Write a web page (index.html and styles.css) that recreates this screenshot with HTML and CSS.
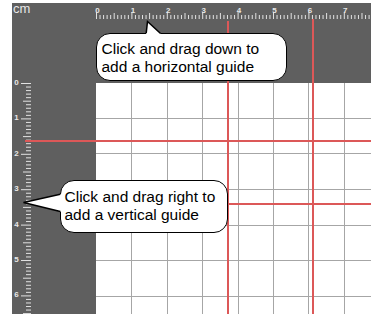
FILE: index.html
```html
<!DOCTYPE html>
<html>
<head>
<meta charset="utf-8">
<link rel="stylesheet" href="styles.css">
</head>
<body>
<div class="app">
  <div class="corner">cm</div>
  <div class="ruler-top">
    <svg class="ruler-svg" width="275" height="80" viewBox="0 0 275 80">
      <path class="ticks" d="M0.5,9v7
        m3.54,-4v4m3.54,-4v4m3.54,-4v4m3.54,-4v4m3.54,-6v6m3.54,-4v4m3.54,-4v4m3.54,-4v4m3.54,-4v4m3.54,-7v7
        m3.54,-4v4m3.54,-4v4m3.54,-4v4m3.54,-4v4m3.54,-6v6m3.54,-4v4m3.54,-4v4m3.54,-4v4m3.54,-4v4m3.54,-7v7
        m3.54,-4v4m3.54,-4v4m3.54,-4v4m3.54,-4v4m3.54,-6v6m3.54,-4v4m3.54,-4v4m3.54,-4v4m3.54,-4v4m3.54,-7v7
        m3.54,-4v4m3.54,-4v4m3.54,-4v4m3.54,-4v4m3.54,-6v6m3.54,-4v4m3.54,-4v4m3.54,-4v4m3.54,-4v4m3.54,-7v7
        m3.54,-4v4m3.54,-4v4m3.54,-4v4m3.54,-4v4m3.54,-6v6m3.54,-4v4m3.54,-4v4m3.54,-4v4m3.54,-4v4m3.54,-7v7
        m3.54,-4v4m3.54,-4v4m3.54,-4v4m3.54,-4v4m3.54,-6v6m3.54,-4v4m3.54,-4v4m3.54,-4v4m3.54,-4v4m3.54,-7v7
        m3.54,-4v4m3.54,-4v4m3.54,-4v4m3.54,-4v4m3.54,-6v6m3.54,-4v4m3.54,-4v4m3.54,-4v4m3.54,-4v4m3.54,-7v7
        m3.54,-4v4m3.54,-4v4m3.54,-4v4m3.54,-4v4m3.54,-6v6m3.54,-4v4m3.54,-4v4"/>
      <g class="nums">
        <text x="1.5" y="9.5">0</text>
        <text x="36.9" y="9.5">1</text>
        <text x="72.3" y="9.5">2</text>
        <text x="107.7" y="9.5">3</text>
        <text x="143.1" y="9.5">4</text>
        <text x="178.5" y="9.5">5</text>
        <text x="213.9" y="9.5">6</text>
        <text x="249.3" y="9.5">7</text>
      </g>
    </svg>
  </div>
  <div class="ruler-left">
    <svg class="ruler-svg" width="84" height="231" viewBox="0 0 84 231">
      <path class="ticks" d="M9,0.5h10
        m-5,3.54h5m-5,3.54h5m-5,3.54h5m-5,3.54h5m-8,3.54h8m-5,3.54h5m-5,3.54h5m-5,3.54h5m-5,3.54h5m-10,3.54h10
        m-5,3.54h5m-5,3.54h5m-5,3.54h5m-5,3.54h5m-8,3.54h8m-5,3.54h5m-5,3.54h5m-5,3.54h5m-5,3.54h5m-10,3.54h10
        m-5,3.54h5m-5,3.54h5m-5,3.54h5m-5,3.54h5m-8,3.54h8m-5,3.54h5m-5,3.54h5m-5,3.54h5m-5,3.54h5m-10,3.54h10
        m-5,3.54h5m-5,3.54h5m-5,3.54h5m-5,3.54h5m-8,3.54h8m-5,3.54h5m-5,3.54h5m-5,3.54h5m-5,3.54h5m-10,3.54h10
        m-5,3.54h5m-5,3.54h5m-5,3.54h5m-5,3.54h5m-8,3.54h8m-5,3.54h5m-5,3.54h5m-5,3.54h5m-5,3.54h5m-10,3.54h10
        m-5,3.54h5m-5,3.54h5m-5,3.54h5m-5,3.54h5m-8,3.54h8m-5,3.54h5m-5,3.54h5m-5,3.54h5m-5,3.54h5m-10,3.54h10
        m-5,3.54h5m-5,3.54h5m-5,3.54h5m-5,3.54h5m-8,3.54h8"/>
      <g class="nums">
        <text x="4.5" y="2">0</text>
        <text x="4.5" y="37.4">1</text>
        <text x="4.5" y="72.8">2</text>
        <text x="4.5" y="108.2">3</text>
        <text x="4.5" y="143.6">4</text>
        <text x="4.5" y="179">5</text>
        <text x="4.5" y="214.4">6</text>
      </g>
    </svg>
  </div>
  <div class="canvas">
    <svg class="grid-svg" width="275" height="231" viewBox="0 0 275 231">
      <path class="grid" d="M35.5,0V231M71.5,0V231M106.5,0V231M142.5,0V231M177.5,0V231M212.5,0V231M248.5,0V231
        M0,35.5H275M0,70.5H275M0,106.5H275M0,142.5H275M0,177.5H275M0,213.5H275"/>
    </svg>
  </div>

  <div class="guide guide-v guide-v1"></div>
  <div class="guide guide-v guide-v2"></div>
  <div class="guide guide-h guide-h1"></div>
  <div class="guide guide-h guide-h2"></div>

  <div class="callout callout-top">
    <svg class="tail tail-up" width="20" height="16" viewBox="0 0 20 16">
      <polygon class="tail-fill" points="1,14.6 2.5,1.5 16.2,14.6"/>
      <polyline class="tail-line" points="1.2,13.2 2.5,1.5 15.3,13.2"/>
    </svg>
    Click and drag down to<br>add a horizontal guide
  </div>

  <div class="callout callout-left">
    <svg class="tail tail-left" width="44" height="24" viewBox="0 0 44 24">
      <polygon class="tail-fill" points="41,1.8 2.5,10.5 41,20"/>
      <polyline class="tail-line" points="39.3,2.2 2.5,10.5 39.3,19.6"/>
    </svg>
    Click and drag right to<br>add a vertical guide
  </div>
</div>
</body>
</html>
```

FILE: styles.css
```css
html, body {
  margin: 0;
  padding: 0;
  background: #ffffff;
  overflow: hidden;
}

.app {
  position: relative;
  margin: 3px 0 0 12px;
  width: 359px;
  height: 311px;
  display: grid;
  grid-template-columns: 84px 1fr;
  grid-template-rows: 80px 1fr;
  background: #5f5f5f;
  font-family: "Liberation Sans", Arial, sans-serif;
}

.corner {
  color: #e8e8e8;
  font-size: 13px;
  line-height: 12px;
  padding: 0 0 0 1px;
}

.ruler-top,
.ruler-left {
  position: relative;
}

.ruler-svg {
  display: block;
  overflow: visible;
}

.ticks {
  fill: none;
  stroke: #e2e2e2;
  stroke-width: 1;
}

.nums text {
  font-family: "Liberation Sans", Arial, sans-serif;
  font-size: 8px;
  font-weight: bold;
  fill: #e8e8e8;
  text-anchor: middle;
}

.canvas {
  background: #ffffff;
  overflow: hidden;
}

.grid-svg {
  display: block;
}

.grid {
  fill: none;
  stroke: #a6a6a6;
  stroke-width: 1;
}

.guide {
  position: absolute;
  background: #dc5858;
}

.guide-v {
  width: 2px;
  bottom: 0;
}

.guide-v1 {
  left: 215px;
  top: 18px;
}

.guide-v2 {
  left: 300px;
  top: 16px;
}

.guide-h {
  height: 2px;
  right: 0;
}

.guide-h1 {
  top: 137px;
  left: 13px;
}

.guide-h2 {
  top: 200px;
  left: 216px;
}

.callout {
  position: absolute;
  box-sizing: border-box;
  background: #ffffff;
  border: 1.5px solid #000000;
  border-radius: 14px;
  color: #000000;
  font-family: "Liberation Sans", Arial, sans-serif;
  font-size: 15.5px;
  line-height: 18px;
  white-space: nowrap;
}

.callout-top {
  left: 84px;
  top: 30px;
  width: 191px;
  height: 48px;
  padding: 6px 0 0 4.5px;
}

.callout-left {
  left: 48px;
  top: 177px;
  width: 168px;
  height: 53px;
  padding: 7px 0 0 3.5px;
}

.tail {
  position: absolute;
  overflow: visible;
}

.tail-up {
  left: 48px;
  top: -14px;
}

.tail-left {
  left: -40px;
  top: 11px;
}

.tail-fill {
  fill: #ffffff;
  stroke: none;
}

.tail-line {
  fill: none;
  stroke: #000000;
  stroke-width: 1.5;
  stroke-linejoin: miter;
}
```
